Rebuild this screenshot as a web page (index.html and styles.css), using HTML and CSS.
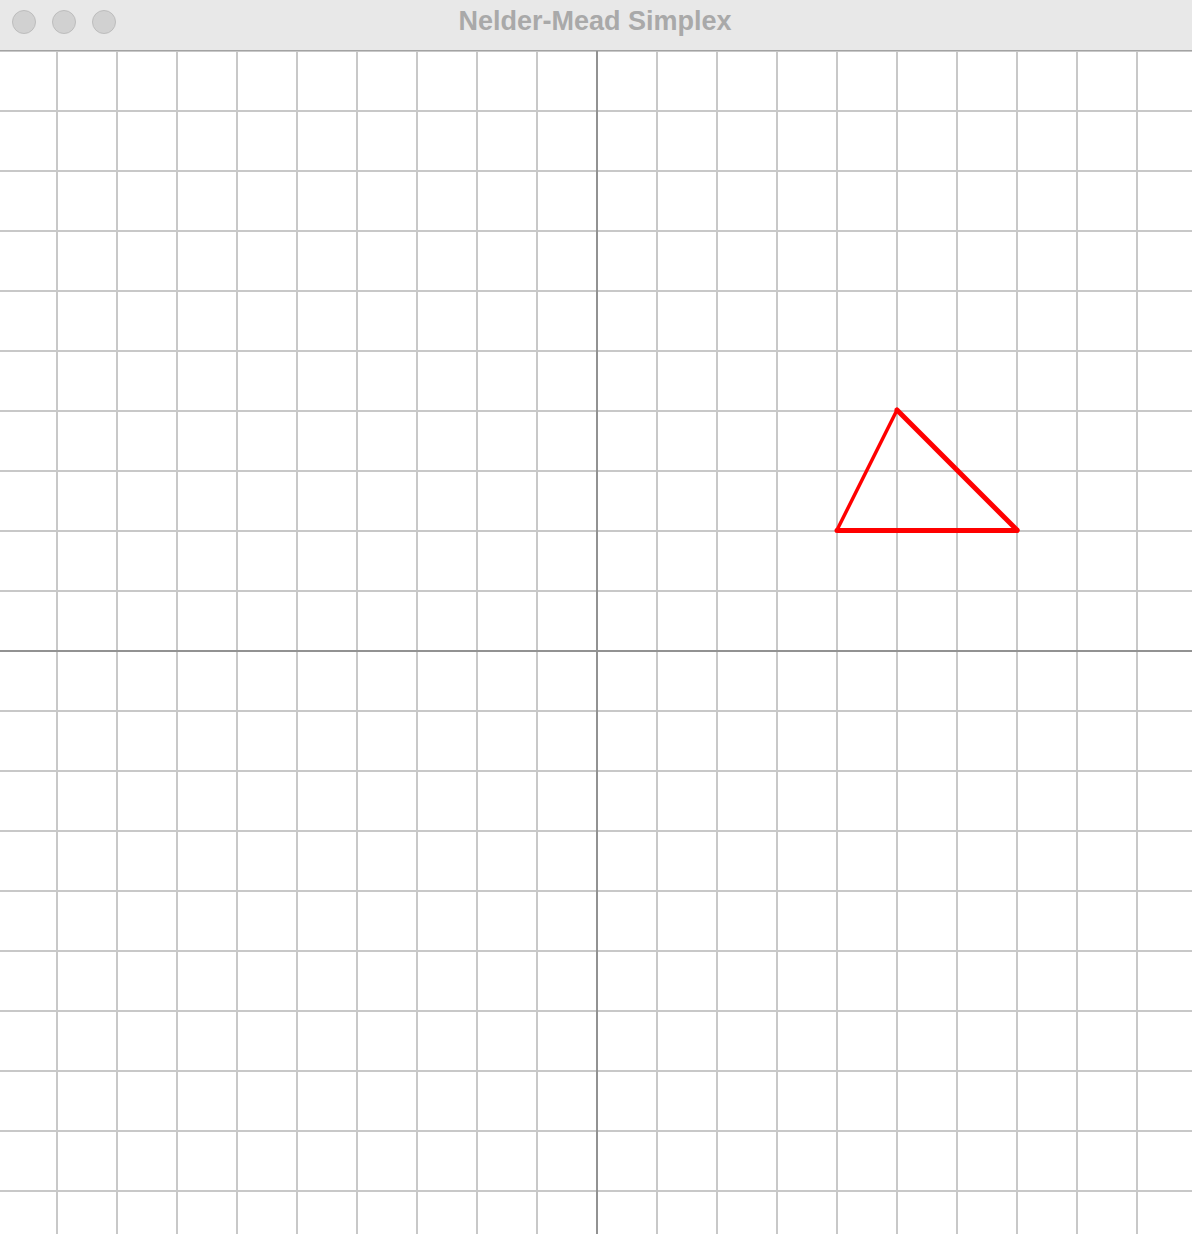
FILE: index.html
```html
<!DOCTYPE html>
<html>
<head>
<meta charset="utf-8">
<title>Nelder-Mead Simplex</title>
<link rel="stylesheet" href="styles.css">
</head>
<body>
<div class="window">
  <header class="titlebar">
    <div class="lights">
      <span class="light"></span>
      <span class="light"></span>
      <span class="light"></span>
    </div>
    <h1 class="title">Nelder-Mead Simplex</h1>
  </header>
  <main class="canvas">
    <svg class="plot" width="1192" height="1183" viewBox="0 0 1192 1183">
      <defs>
        <pattern id="grid" x="27" y="0" width="60" height="60" patternUnits="userSpaceOnUse">
          <rect x="29" y="0" width="2" height="60" fill="#c8c8c8"/>
          <rect x="0" y="-1" width="60" height="2" fill="#c8c8c8"/>
          <rect x="0" y="59" width="60" height="2" fill="#c8c8c8"/>
        </pattern>
      </defs>
      <rect x="0" y="0" width="1192" height="1183" fill="url(#grid)"/>
      <rect x="596" y="0" width="2" height="1183" fill="#929292"/>
      <rect x="0" y="599" width="1192" height="2" fill="#929292"/>
      <g stroke="#ff0000" stroke-linecap="round" fill="none">
        <line x1="837" y1="479" x2="897" y2="359" stroke-width="3.5"/>
        <line x1="897" y1="359" x2="1017" y2="479" stroke-width="5"/>
        <line x1="837" y1="479.5" x2="1017" y2="479.5" stroke-width="5"/>
      </g>
    </svg>
  </main>
</div>
</body>
</html>
```
FILE: styles.css
```css
html, body {
  margin: 0;
  padding: 0;
  background: #ffffff;
}
.window {
  width: 1192px;
  height: 1234px;
  display: flex;
  flex-direction: column;
  overflow: hidden;
}
.titlebar {
  height: 50px;
  flex: 0 0 50px;
  background: #e8e8e8;
  border-bottom: 1px solid #a3a3a3;
  display: flex;
  align-items: center;
  position: relative;
}
.lights {
  display: flex;
  gap: 16px;
  padding-left: 12px;
  margin-top: -6px;
}
.light {
  width: 22px;
  height: 22px;
  border-radius: 50%;
  background: #d1d1d1;
  border: 1px solid #bdbdbd;
}
.title {
  position: absolute;
  left: 0;
  right: 0;
  top: 0;
  margin: 0;
  text-align: center;
  padding-right: 2px;
  line-height: 42px;
  font-family: "Liberation Sans", Arial, sans-serif;
  font-weight: bold;
  font-size: 27px;
  color: #a9a9a9;
}
.canvas {
  flex: 1;
  display: block;
}
.plot {
  display: block;
}
```
